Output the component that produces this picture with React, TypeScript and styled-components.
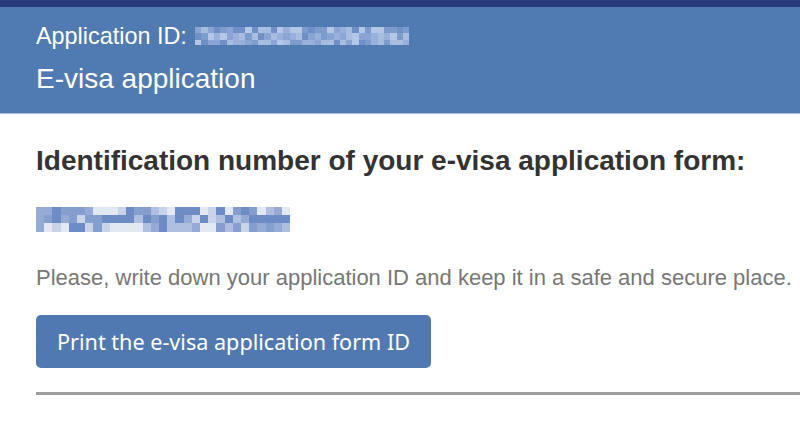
import React from "react";
import styled, { createGlobalStyle } from "styled-components";

const GlobalStyle = createGlobalStyle`
  html, body { margin: 0; padding: 0; background: #ffffff; }
  body { font-family: "Liberation Sans", Arial, sans-serif; overflow: hidden; }
`;

const Page = styled.div`
  width: 800px;
  height: 422px;
  overflow: hidden;
  background: #ffffff;
`;

const TopBar = styled.div`
  height: 7px;
  background: #263a7c;
`;

const Header = styled.header`
  background: #507ab2;
  padding: 15px 36px 17px;
  border-bottom: 1px solid #a9c0e0;
  color: #ffffff;
  display: flex;
  flex-direction: column;
  gap: 12px;
`;

const IdLine = styled.div`
  display: flex;
  align-items: center;
  gap: 8px;
  font-size: 23.4px;
  line-height: 28px;
  height: 28px;
`;

const Title = styled.h1`
  margin: 0;
  font-weight: 400;
  font-size: 28px;
  line-height: 34px;
`;

const Main = styled.main`
  padding: 30px 0 0 36px;
  display: flex;
  flex-direction: column;
  align-items: flex-start;
`;

const Heading = styled.h2`
  margin: 0;
  font-size: 28px;
  line-height: 34px;
  font-weight: 700;
  color: #333333;
  white-space: nowrap;
`;

const IdBlock = styled.div`
  margin-top: 29px;
  height: 25px;
  display: flex;
`;

const Note = styled.p`
  margin: 33px 0 0;
  font-size: 22px;
  line-height: 26px;
  color: #777777;
  white-space: nowrap;
`;

const PrintButton = styled.button`
  margin-top: 24px;
  height: 53px;
  padding: 0 21px;
  border: none;
  border-radius: 5px;
  background: #5079b2;
  color: #ffffff;
  font-family: "Noto Sans", "Open Sans", sans-serif;
  font-size: 21.6px;
  cursor: pointer;
`;

const Rule = styled.hr`
  align-self: stretch;
  margin: 24px 0 0;
  border: none;
  height: 3px;
  background: #9e9e9e;
`;

function rng(seed: number) {
  let s = seed;
  return () => {
    s = (s * 1103515245 + 12345) & 0x7fffffff;
    return s / 0x7fffffff;
  };
}

type MosaicProps = {
  cols: number;
  rows: number;
  cell: number;
  seed: number;
  palette: string[];
  hyphens?: number[];
  middleBias?: number;
};

function Mosaic({ cols, rows, cell, seed, palette, hyphens = [], middleBias = 0 }: MosaicProps) {
  const r = rng(seed);
  const rects: React.ReactNode[] = [];
  for (let y = 0; y < rows; y++) {
    for (let x = 0; x < cols; x++) {
      const bias = y === 1 ? middleBias : 0;
      let idx = Math.min(palette.length - 1, Math.floor(r() * palette.length + bias));
      if (hyphens.includes(x)) idx = y === 1 ? palette.length - 1 : 0;
      rects.push(
        <rect
          key={`${x}-${y}`}
          x={x * cell}
          y={y * cell}
          width={cell + 0.5}
          height={cell + 0.5}
          fill={palette[idx]}
        />
      );
    }
  }
  return (
    <svg
      width={cols * cell}
      height={rows * cell}
      viewBox={`0 0 ${cols * cell} ${rows * cell}`}
      shapeRendering="crispEdges"
    >
      {rects}
    </svg>
  );
}

export default function App() {
  return (
    <Page>
      <GlobalStyle />
      <TopBar />
      <Header>
        <IdLine>
          <span>Application ID:</span>
          <Mosaic
            cols={34}
            rows={3}
            cell={6.3}
            seed={7}
            palette={["#b5c7e6", "#a9bde0", "#98b0da", "#8aa5d3", "#7d9bcd", "#6f8fc6"]}
          />
        </IdLine>
        <Title>E-visa application</Title>
      </Header>
      <Main>
        <Heading>Identification number of your e-visa application form:</Heading>
        <IdBlock>
          <Mosaic
            cols={31}
            rows={3}
            cell={8.2}
            seed={42}
            palette={["#e3e9f3", "#c9d4e9", "#aebfdf", "#95abd5", "#849ecd", "#6d8bc4"]}
            hyphens={[9, 20]}
            middleBias={1.5}
          />
        </IdBlock>
        <Note>Please, write down your application ID and keep it in a safe and secure place.</Note>
        <PrintButton>Print the e-visa application form ID</PrintButton>
        <Rule />
      </Main>
    </Page>
  );
}
